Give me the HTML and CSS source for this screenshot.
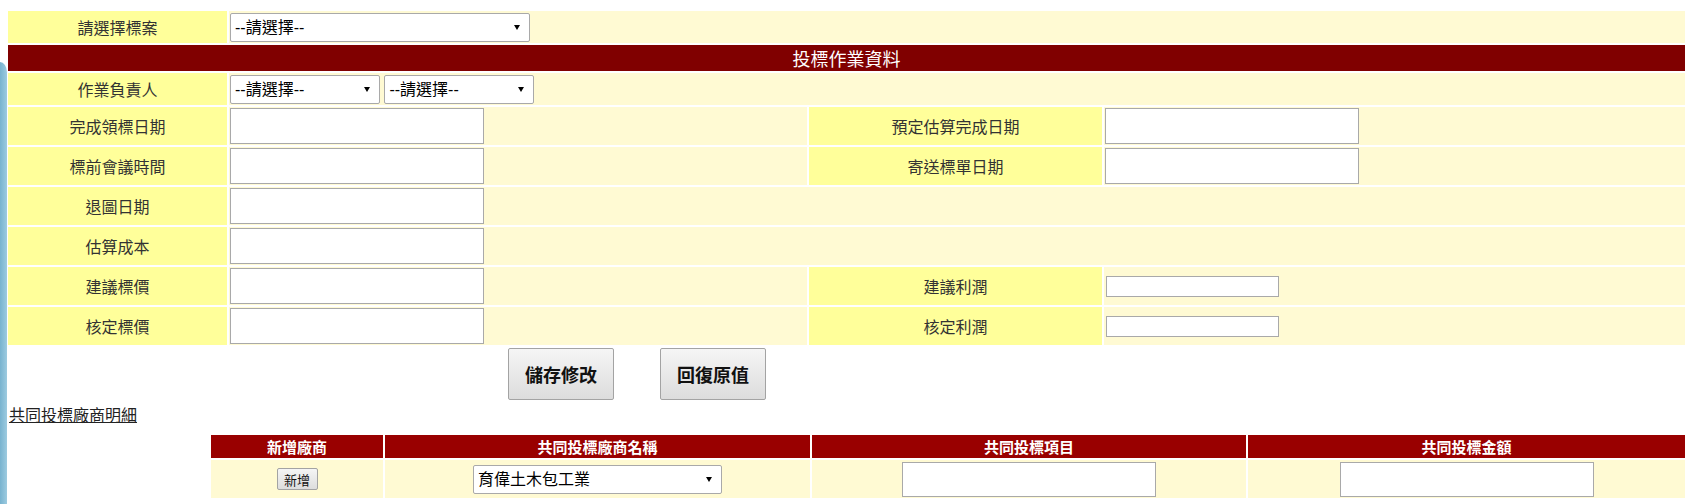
FILE: index.html
```html
<!DOCTYPE html>
<html lang="zh-Hant">
<head>
<meta charset="utf-8">
<title>投標作業資料</title>
<link rel="stylesheet" href="styles.css">
</head>
<body>
<div class="page">
  <table class="main">
    <colgroup>
      <col class="c1"><col class="c2"><col class="c4"><col class="c5">
    </colgroup>
    <tr class="r-sel">
      <td class="lbl">請選擇標案</td>
      <td class="val" colspan="3"><span class="sel w300"><select><option>--請選擇--</option></select></span></td>
    </tr>
    <tr class="r-head">
      <td class="head" colspan="4">投標作業資料</td>
    </tr>
    <tr class="r-sel">
      <td class="lbl">作業負責人</td>
      <td class="val" colspan="3"><span class="sel w150"><select><option>--請選擇--</option></select></span> <span class="sel w150"><select><option>--請選擇--</option></select></span></td>
    </tr>
    <tr class="r-in">
      <td class="lbl">完成領標日期</td>
      <td class="val"><input class="big" type="text"></td>
      <td class="lbl">預定估算完成日期</td>
      <td class="val"><input class="big" type="text"></td>
    </tr>
    <tr class="r-in">
      <td class="lbl">標前會議時間</td>
      <td class="val"><input class="big" type="text"></td>
      <td class="lbl">寄送標單日期</td>
      <td class="val"><input class="big" type="text"></td>
    </tr>
    <tr class="r-in">
      <td class="lbl">退圖日期</td>
      <td class="val" colspan="3"><input class="big" type="text"></td>
    </tr>
    <tr class="r-in">
      <td class="lbl">估算成本</td>
      <td class="val" colspan="3"><input class="big" type="text"></td>
    </tr>
    <tr class="r-in">
      <td class="lbl">建議標價</td>
      <td class="val"><input class="big" type="text"></td>
      <td class="lbl">建議利潤</td>
      <td class="val"><input class="small" type="text"></td>
    </tr>
    <tr class="r-in">
      <td class="lbl">核定標價</td>
      <td class="val"><input class="big" type="text"></td>
      <td class="lbl">核定利潤</td>
      <td class="val"><input class="small" type="text"></td>
    </tr>
  </table>

  <div class="actions">
    <button class="btn" type="button">儲存修改</button>
    <button class="btn" type="button">回復原值</button>
  </div>

  <div class="linkline"><a href="#" class="detail">共同投標廠商明細</a></div>

  <table class="partners">
    <colgroup>
      <col class="p1"><col class="p2"><col class="p3"><col class="p4">
    </colgroup>
    <tr class="p-head">
      <th>新增廠商</th>
      <th>共同投標廠商名稱</th>
      <th>共同投標項目</th>
      <th>共同投標金額</th>
    </tr>
    <tr class="p-row">
      <td><button class="add" type="button">新增</button></td>
      <td><span class="sel w249"><select><option>育偉土木包工業</option></select></span></td>
      <td><input class="big" type="text"></td>
      <td><input class="big" type="text"></td>
    </tr>
  </table>
</div>
</body>
</html>
```

FILE: styles.css
```css
html, body {
  margin: 0;
  padding: 0;
  background: #ffffff;
}

body {
  font-family: "Liberation Sans", "Noto Sans CJK TC", sans-serif;
  font-size: 16px;
  color: #333333;
  position: relative;
  min-height: 504px;
  overflow: hidden;
}

body::before {
  content: "";
  position: absolute;
  left: 0;
  top: 62px;
  width: 7px;
  bottom: 0;
  background: linear-gradient(90deg, #78b3cf 0%, #9dcbe0 100%);
  border-top-right-radius: 40px 60px;
}

.page {
  padding: 9px 8px 0 6px;
}

/* ---------- main table ---------- */
.main {
  width: 100%;
  border-collapse: separate;
  border-spacing: 2px;
  table-layout: fixed;
}

.main .c1 { width: 219px; }
.main .c2 { width: 578px; }
.main .c4 { width: 293px; }
.main .c5 { width: 581px; }

.main td {
  padding: 0 1px;
  vertical-align: middle;
}

.r-sel td { height: 32px; }
.r-head td { height: 26px; }
.r-in td { height: 38px; }

.lbl {
  background: #ffff9a;
  text-align: center;
  color: #333333;
}

.val {
  background: #fffad3;
  text-align: left;
}

.head {
  background: #800000;
  color: #ffffff;
  text-align: center;
  font-size: 18px;
}

/* ---------- controls ---------- */
.sel {
  position: relative;
  display: inline-block;
  vertical-align: middle;
}

.sel select {
  appearance: none;
  -webkit-appearance: none;
  width: 100%;
  height: 29px;
  margin: 0;
  padding: 0 18px 0 4px;
  border: 1px solid #a9a9a9;
  border-radius: 2px;
  background: #ffffff;
  font-family: "Liberation Sans", "Noto Sans CJK TC", sans-serif;
  font-size: 16px;
  color: #000000;
  display: block;
}

.sel::after {
  content: "";
  position: absolute;
  right: 10px;
  top: 12px;
  width: 0;
  height: 0;
  border-left: 3px solid transparent;
  border-right: 3px solid transparent;
  border-top: 5px solid #000000;
  pointer-events: none;
}

.w300 { width: 300px; }
.w150 { width: 150px; }
.w249 { width: 249px; }

input.big,
input.small {
  box-sizing: border-box;
  margin: 0;
  padding: 0 3px;
  border: 1px solid #a9a9a9;
  background: #ffffff;
  display: block;
  font-size: 16px;
}

input.big {
  width: 254px;
  height: 36px;
}

input.small {
  width: 173px;
  height: 21px;
  margin-left: 1px;
}

/* ---------- actions ---------- */
.actions {
  display: flex;
  gap: 46px;
  padding-left: 502px;
  margin-top: 1px;
}

.btn {
  width: 106px;
  height: 52px;
  border: 1px solid #a3a3a3;
  border-radius: 2px;
  background: linear-gradient(#f5f5f5, #dcdcdc);
  font-family: "Liberation Sans", "Noto Sans CJK TC", sans-serif;
  font-size: 18px;
  font-weight: bold;
  color: #111111;
  padding: 0;
}

.linkline {
  margin-top: 6px;
  padding-left: 3px;
  line-height: 20px;
}

.detail {
  color: #222222;
  text-decoration: underline;
}

/* ---------- partners table ---------- */
.partners {
  margin: 7px 0 0 203px;
  width: 1478px;
  border-collapse: separate;
  border-spacing: 2px;
  table-layout: fixed;
}

.partners .p1 { width: 172px; }
.partners .p2 { width: 425px; }
.partners .p3 { width: 434px; }
.partners .p4 { width: 437px; }

.p-head th {
  background: #990000;
  color: #ffffff;
  font-size: 15px;
  font-weight: bold;
  height: 23px;
  padding: 0;
  text-align: center;
}

.p-row td {
  background: #fffad3;
  height: 38px;
  padding: 0;
  text-align: center;
  vertical-align: middle;
}

.p-row input.big {
  margin: 0 auto;
  height: 35px;
}

.p-row .sel {
  text-align: left;
}

.add {
  width: 41px;
  height: 22px;
  padding: 0;
  border: 1px solid #a3a3a3;
  border-radius: 2px;
  background: linear-gradient(#f5f5f5, #dddddd);
  font-family: "Liberation Sans", "Noto Sans CJK TC", sans-serif;
  font-size: 13px;
  color: #111111;
  vertical-align: middle;
}
```
